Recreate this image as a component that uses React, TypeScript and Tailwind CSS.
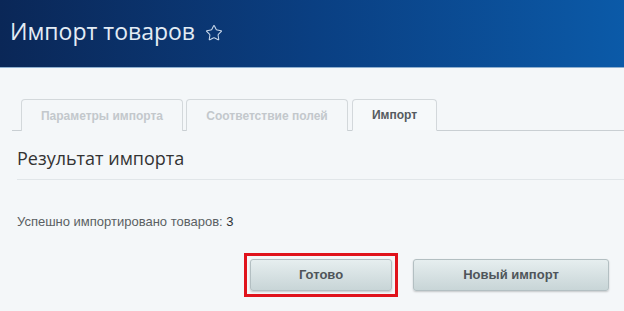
import { Star } from 'lucide-react';

export default function App() {
  const tabs = [
    { label: 'Параметры импорта', w: 'w-[162px]', active: false },
    { label: 'Соответствие полей', w: 'w-[162px]', active: false },
    { label: 'Импорт', w: 'w-[85px]', active: true },
  ];

  return (
    <div className="w-[624px] h-[311px] overflow-hidden bg-[#f4f7f9] font-['Liberation_Sans',Arial,sans-serif]">
      {/* header */}
      <div className="h-[68px] bg-gradient-to-r from-[#0a2757] via-[#0a3f82] to-[#0b5aa8] border-b border-[#8fb0d0] flex items-center pl-[10px] pb-[5px]">
        <h1 className="font-['Open_Sans',sans-serif] text-[23px] text-[#e3ecf5] leading-none">Импорт товаров</h1>
        <Star className="ml-[10px] mt-[4px] text-[#c9d8ea]" size={18} strokeWidth={1.4} />
      </div>

      <div className="pl-[12px]">
        {/* tabs */}
        <div className="mt-[31px] flex items-end gap-[3px] pl-[9px] border-b border-[#c9cfd3] h-[32px]">
          {tabs.map((t) => (
            <div
              key={t.label}
              className={
                t.w +
                ' h-[32px] -mb-px rounded-t-[4px] border border-[#d3d8db] flex items-center justify-center text-[12px] font-bold ' +
                (t.active
                  ? 'ml-[1px] border-[#c3c9cd] border-b-[#f4f7f9] bg-[#f6f9fa] text-[#555b60]'
                  : 'border-b-0 bg-[#f4f7f9] text-[#c3c8cc]')
              }
            >
              {t.label}
            </div>
          ))}
        </div>

        {/* section title */}
        <div className="ml-[5px] mt-[17px] pb-[10px] border-b border-[#e1e6e9]">
          <h2 className="font-['Open_Sans',sans-serif] text-[18px] text-[#333] leading-[21px]">Результат импорта</h2>
        </div>

        <p className="ml-[5px] mt-[35px] text-[13px] text-[#5a5f63] leading-none">
          Успешно импортировано товаров: <span className="text-[#2e3236]">3</span>
        </p>

        {/* buttons */}
        <div className="mt-[25px] flex items-center">
          <div className="ml-[232px] border-[3px] border-[#e0131c] p-[3px]">
            <button className="w-[142px] h-[32px] rounded-[3px] border border-[#b3bfc2] bg-gradient-to-b from-[#e6eeef] to-[#c8d5d7] shadow-[0_1px_2px_rgba(0,0,0,0.2)] text-[13px] font-bold text-[#4f555a]">
              Готово
            </button>
          </div>
          <button className="ml-[15px] w-[196px] h-[32px] rounded-[3px] border border-[#b3bfc2] bg-gradient-to-b from-[#e6eeef] to-[#c8d5d7] shadow-[0_1px_2px_rgba(0,0,0,0.2)] text-[13px] font-bold text-[#4f555a]">
            Новый импорт
          </button>
        </div>
      </div>
    </div>
  );
}
